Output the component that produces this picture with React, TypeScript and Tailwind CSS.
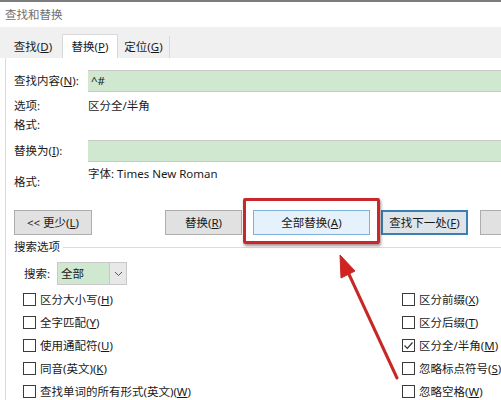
import React from 'react';

function Box({ checked }: { checked?: boolean }) {
  return (
    <div className="flex h-[13px] w-[13px] shrink-0 items-center justify-center border border-[#3a3a3a] bg-white">
      {checked && (
        <svg width="11" height="11" viewBox="0 0 11 11">
          <path d="M1.5 5.5l2.8 2.8L9.5 2.5" fill="none" stroke="#333" strokeWidth="1.2" />
        </svg>
      )}
    </div>
  );
}

function Check({ label, k, checked }: { label: string; k: string; checked?: boolean }) {
  return (
    <div className="flex shrink-0 items-center">
      <Box checked={checked} />
      <span className="ml-[4px] whitespace-nowrap">
        {label}(<u>{k}</u>)
      </span>
    </div>
  );
}

const left = [
  ['区分大小写', 'H'],
  ['全字匹配', 'Y'],
  ['使用通配符', 'U'],
  ['同音(英文)', 'K'],
  ['查找单词的所有形式(英文)', 'W'],
];
const right = [
  ['区分前缀', 'X'],
  ['区分后缀', 'T'],
  ['区分全/半角', 'M'],
  ['忽略标点符号', 'S'],
  ['忽略空格', 'W'],
];

export default function App() {
  return (
    <div className="relative h-[400px] w-[501px] overflow-hidden bg-white font-['Noto_Sans','Noto_Sans_CJK_SC',sans-serif] text-[11.5px] leading-[16px] text-[#1a1a1a]">
      <div className="h-[2px] bg-[#7d7d7d]" />
      <div className="flex h-[25px] items-center pl-[5px] text-[#707070]">查找和替换</div>

      <div className="flex h-[31px] items-end bg-[#f0f0f0] pl-[8px]">
        <div className="flex h-[22px] w-[50px] items-center justify-center">
          查找(<u>D</u>)
        </div>
        <div className="ml-[4px] flex h-[24px] w-[56px] items-center justify-center border-x border-t border-[#d9d9d9] bg-white">
          替换(<u>P</u>)
        </div>
        <div className="flex h-[22px] w-[52px] items-center justify-center border-r border-[#d9d9d9]">
          定位(<u>G</u>)
        </div>
      </div>

      <div className="ml-[5px] h-[342px] border-l border-[#dadada] pl-[8px] pt-[12px]">
        <div className="flex h-[22px] items-center">
          <div className="w-[74px] shrink-0">
            查找内容(<u>N</u>):
          </div>
          <div className="flex h-[22px] flex-1 items-start border-y border-[#c8c8c8] bg-[#cfe8cf] pl-[3px] pt-[2px]">^#</div>
        </div>
        <div className="mt-[5px] flex h-[18px] items-center">
          <div className="w-[74px] shrink-0">选项:</div>
          <div>区分全/半角</div>
        </div>
        <div className="mt-[1px] flex h-[18px] items-center">
          <div className="w-[74px] shrink-0">格式:</div>
        </div>
        <div className="mt-[6px] flex h-[22px] items-center">
          <div className="w-[74px] shrink-0">
            替换为(<u>I</u>):
          </div>
          <div className="h-[22px] flex-1 border-y border-[#c8c8c8] bg-[#cfe8cf]" />
        </div>
        <div className="mt-[4px] flex h-[24px] items-start">
          <div className="mt-[8px] w-[74px] shrink-0">格式:</div>
          <div>字体: Times New Roman</div>
        </div>

        <div className="mt-[20px] flex h-[25px] items-stretch">
          <div className="flex w-[78px] shrink-0 items-center justify-center border border-[#adadad] bg-[#e1e1e1]">
            &lt;&lt; 更少(<u>L</u>)
          </div>
          <div className="ml-[73px] flex w-[77px] shrink-0 items-center justify-center border border-[#adadad] bg-[#e1e1e1]">
            替换(<u>R</u>)
          </div>
          <div className="ml-[11px] flex w-[117px] shrink-0 items-center justify-center border border-[#7fb1dd] bg-[#e5f1fb]">
            全部替换(<u>A</u>)
          </div>
          <div className="ml-[11px] flex w-[87px] shrink-0 items-center justify-center border-2 border-[#3c7fb1] bg-[#dde4ea]">
            查找下一处(<u>F</u>)
          </div>
          <div className="ml-[12px] w-[60px] shrink-0 border border-[#adadad] bg-[#e1e1e1]" />
        </div>

        <div className="mt-[4px] flex h-[16px] items-center">
          <span>搜索选项</span>
          <div className="ml-[3px] h-px flex-1 bg-[#dcdcdc]" />
        </div>

        <div className="mt-[7px] flex h-[23px] items-center pl-[10px]">
          <div className="w-[33px] shrink-0">搜索:</div>
          <div className="flex h-[23px] w-[70px] shrink-0 border border-[#c8c8c8]">
            <div className="flex flex-1 items-center bg-[#cfe8cf] pl-[3px]">全部</div>
            <div className="flex w-[17px] items-center justify-center border-l border-[#c8c8c8] bg-[#e8e8e8]">
              <svg width="9" height="6" viewBox="0 0 9 6">
                <path d="M1 1l3.5 3.5L8 1" fill="none" stroke="#555" strokeWidth="1" />
              </svg>
            </div>
          </div>
        </div>

        <div className="mt-[3px] flex flex-col">
          {left.map(([l, k], i) => (
            <div key={i} className="flex h-[23px] items-center pl-[9px]">
              <div className="w-[379px] shrink-0">
                <Check label={l} k={k} />
              </div>
              <Check label={right[i][0]} k={right[i][1]} checked={i === 2} />
            </div>
          ))}
        </div>
      </div>

      <div className="pointer-events-none absolute left-[243px] top-[198px] h-[46px] w-[137px] rounded-[2px] border-[3px] border-[#c8282b] shadow-[1px_2px_3px_rgba(60,0,0,0.45)]" />

      <svg className="pointer-events-none absolute left-0 top-0" width="501" height="400" viewBox="0 0 501 400">
        <line x1="397" y1="378" x2="347" y2="270" stroke="#c62828" strokeWidth="3" strokeLinecap="round" />
        <polygon points="340,255 355,271 341,278" fill="#d32020" stroke="#c62828" strokeWidth="1" />
      </svg>
    </div>
  );
}
